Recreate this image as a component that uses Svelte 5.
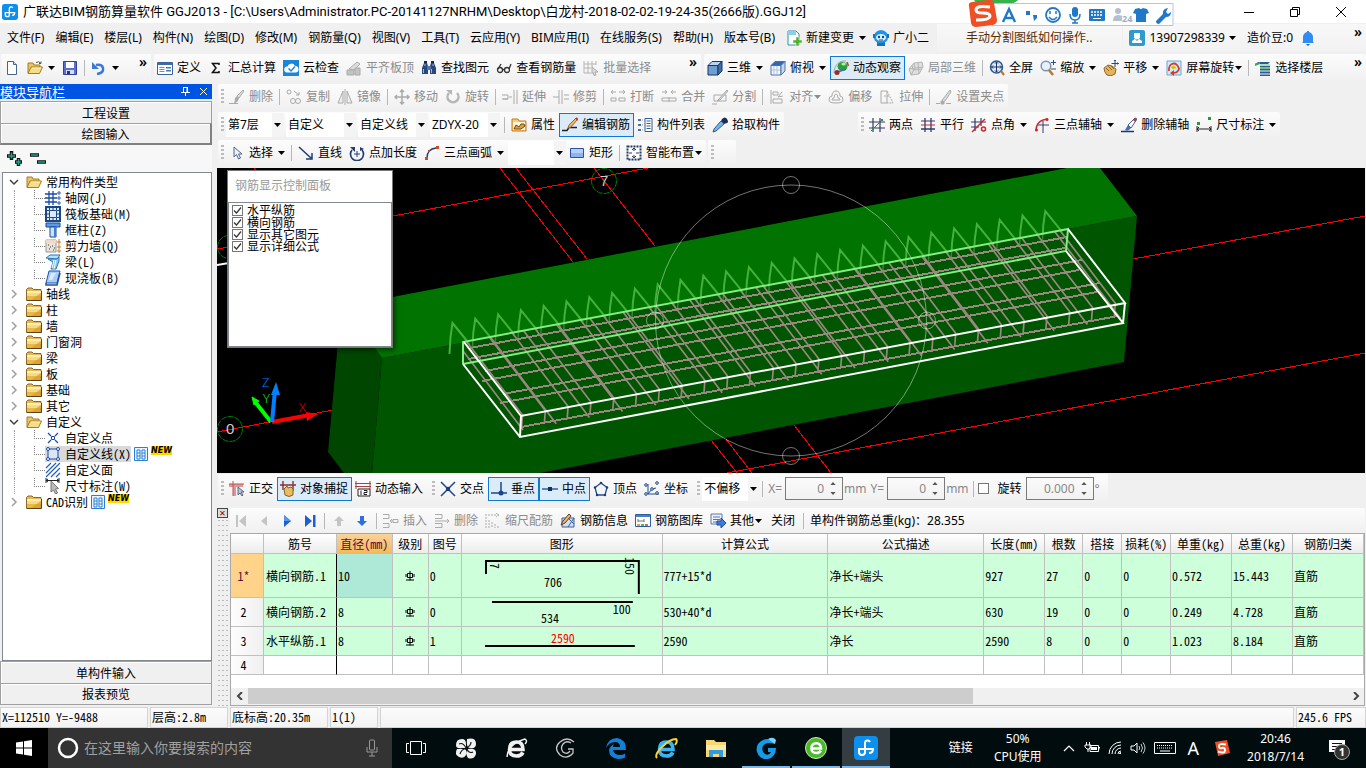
<script lang="ts">
	type Item = {
		kind: 'button' | 'sep' | 'grip' | 'select';
		icon?: string;
		label?: string;
		off?: boolean;
		active?: boolean;
		drop?: 'wide' | 'tight';
		size?: string;
		name?: string;
	};

	const sep: Item = { kind: 'sep' };
	const grip: Item = { kind: 'grip' };
	const tool = (icon: string, label: string, more: Partial<Item> = {}): Item => ({ kind: 'button', icon, label, ...more });
	const combo = (label: string, size: string, name: string): Item => ({ kind: 'select', label, size, name });
	const off = { off: true };

	const menus = ['文件(F)', '编辑(E)', '楼层(L)', '构件(N)', '绘图(D)', '修改(M)', '钢筋量(Q)', '视图(V)', '工具(T)', '云应用(Y)', 'BIM应用(I)', '在线服务(S)', '帮助(H)', '版本号(B)'];

	const fileBar: Item[] = [tool('new', ''), tool('open', '', { drop: 'wide' }), tool('save', ''), sep, tool('undo', '', { drop: 'wide' })];
	const calcBar: Item[] = [
		tool('define', '定义'), tool('sigma', '汇总计算'), tool('cloud', '云检查'), tool('flush', '平齐板顶', off),
		tool('find', '查找图元'), tool('glasses', '查看钢筋量'), tool('batch', '批量选择', off)
	];
	const viewBar: Item[] = [
		tool('cube', '三维', { drop: 'wide' }), tool('top', '俯视', { drop: 'wide' }), tool('orbit', '动态观察', { active: true }),
		tool('local', '局部三维', off), sep, tool('full', '全屏'), tool('zoom', '缩放', { drop: 'wide' }),
		tool('pan', '平移', { drop: 'wide' }), tool('spin', '屏幕旋转', { drop: 'tight' }), sep, tool('floors', '选择楼层')
	];
	const modifyBar: Item[] = [
		grip, tool('brush', '删除', off), sep, tool('copy', '复制', off), tool('mirror', '镜像', off), sep,
		tool('move', '移动', off), tool('rotate', '旋转', off), sep, tool('extend', '延伸', off), tool('trim', '修剪', off), sep,
		tool('break', '打断', off), tool('join', '合并', off), tool('split', '分割', off), sep,
		tool('align', '对齐', { off: true, drop: 'tight' }), tool('offset', '偏移', off), tool('stretch', '拉伸', off), sep,
		tool('pen', '设置夹点', off)
	];
	const memberBar: Item[] = [
		grip, combo('第7层', 'short', '楼层'), combo('自定义', 'long', '构件类型'), combo('自定义线', 'long', '构件'), combo('ZDYX-20', 'long', '构件名称'), sep,
		tool('props', '属性'), tool('editbar', '编辑钢筋', { active: true }), tool('list', '构件列表'), tool('picker', '拾取构件')
	];
	const axisBar: Item[] = [
		grip, tool('twopt', '两点'), tool('parallel', '平行'), tool('ptangle', '点角', { drop: 'wide' }),
		tool('arcaxis', '三点辅轴', { drop: 'wide' }), tool('delaxis', '删除辅轴'), tool('dim', '尺寸标注', { drop: 'wide' })
	];
	const drawBar: Item[] = [
		grip, tool('cursor', '选择', { drop: 'wide' }), sep, tool('line', '直线'), tool('ptlen', '点加长度'),
		tool('arc', '三点画弧', { drop: 'wide' }), combo('', 'short', '画法'), tool('rect', '矩形'), sep, tool('smart', '智能布置', { drop: 'tight' })
	];
	const snapBar: Item[] = [
		grip, tool('ortho', '正交'), tool('osnap', '对象捕捉', { active: true }), tool('dyn', '动态输入'), grip,
		tool('cross', '交点'), tool('perp', '垂点', { active: true }), tool('mid', '中点', { active: true }), tool('vertex', '顶点'),
		tool('coord', '坐标'), grip, combo('不偏移', 'short', '偏移方式'), sep
	];
	const rebarBar: Item[] = [
		tool('first', '', off), tool('prev', '', off), tool('next', ''), tool('last', ''), sep, tool('up', '', off), tool('down', ''), sep,
		tool('insert', '插入', off), tool('remove', '删除', off), tool('scale', '缩尺配筋', off), tool('info', '钢筋信息'),
		tool('lib', '钢筋图库'), tool('other', '其他', { drop: 'tight' })
	];

	const tips: Record<string, string> = {
		new: '新建', open: '打开', save: '保存', undo: '撤销', first: '首行', prev: '上一行', next: '下一行', last: '末行', up: '上移', down: '下移', bell: '消息'
	};

	const folder = '<path d="M.5 14.500V3.500L2 2h4l1.500 1.500H15v11z" fill="#e9b949" stroke="#8a6a24"/><path d="M1 5h14v2H1z" fill="#fff0b8"/><path d="M1 7h14v3H1z" fill="#f9da80"/><path d="M15 7v7H5z" fill="#d99a28" opacity=".7"/><path d="M1 14.500h14.500V5" fill="none" stroke="#5a4418"/>';
	const folderOpen = '<path d="M1 13V3h5l1 2h6v3" fill="#e9c565" stroke="#a67c1e"/><path d="M1 13.500 4 7h11.500l-3 6.500z" fill="#fbdc84" stroke="#a67c1e"/><path d="M5 8h9" stroke="#fff3c4"/>';
	const box = (a: string, b: string, c: string, s: string) =>
		`<g stroke="${s}"><path d="M1 5.500 5 1.500h10l-4 4z" fill="${a}"/><path d="M1 5.500h10v9.500H1z" fill="${b}"/><path d="M11 5.500l4-4V11l-4 4z" fill="${c}"/></g>`;

	const icons: Record<string, string> = {
		new: '<path d="M3.500 1.500h6l3 3v10h-9z" fill="#fff" stroke="#4a6484"/><path d="M9.500 1.500v3h3" fill="#cfdcec" stroke="#4a6484"/>',
		open: folderOpen + '<path d="M9 2.500q3-2 5 1m0-2v2h-2" fill="none" stroke="#555"/>',
		save: '<path d="M1.500 1.500h13v13h-13z" fill="#5b6fd0" stroke="#333f9a"/><path d="M4 2h8v6H4z" fill="#fff"/><path d="M4 10h8v4H4z" fill="#d6dcf5"/><path d="M5 11h3v3H5z" fill="#28348a"/>',
		undo: '<path d="M6 14q7-1 6-6-1-4-7-3" fill="none" stroke="#3b78d8" stroke-width="2.500"/><path d="M1 2v7h7z" fill="#3b78d8"/>',
		define: '<path d="M.5 2.500h15v12H.5z" fill="#fff" stroke="#3a6598"/><path d="M1 3h14v2H1z" fill="#3a6bb0"/><path d="M2.500 7.500h5m-5 2h5m-5 2h5" stroke="#6c8eb8"/><path d="M9 7h5v1.500H9zm0 3h5v1.500H9z" fill="#4878b5"/>',
		sigma: '<path d="M11 5V3.500H4.500L8 8l-3.500 4.500H11V11" fill="none" stroke="#111" stroke-width="1.500"/>',
		cloud: '<path d="M0 0h16v16H0z" fill="#1b86d8"/><path d="M4 12.500a3 3 0 0 1 .5-6A4 4 0 0 1 12 6a3 3 0 0 1 .5 6.500z" fill="#fff"/><path d="M5.500 8.500 8 11l4-4.500" fill="none" stroke="#1b86d8" stroke-width="1.500"/>',
		flush: '<path d="M3 9 11 2l3 2-6 6z" fill="#ddd" stroke="#aaa"/><path d="M1 10h7v5H1zM9 8h5v7H9z" fill="#c4c4c4" stroke="#aaa"/>',
		find: '<path d="M3 3h3l1 3v8H1V8zM10 3h3l2 5v6H9V6z" fill="#28487c"/><path d="M6 6h4v4H6z" fill="#5174aa"/><path d="M2.500 9v4M10.500 9v4M4 4v2m8-2v2" stroke="#9dbbe8"/><path d="M3 1h3v2H3zm7 0h3v2h-3z" fill="#14284c"/>',
		glasses: '<g fill="none" stroke="#333" stroke-width="1.300"><circle cx="4" cy="10" r="2.500"/><circle cx="11" cy="10" r="2.500"/><path d="M6.500 10q1-1 2 0M2 9l3-5m8 5 2-5"/></g>',
		batch: '<path d="M1 1v12h7M1 4h12M1 8h7M5 1v12M9 1v6M13 1v4" fill="none" stroke="#b5b5b5"/><path d="M9 7l6 5h-3l1 3-2 .5-1-3-1 1z" fill="#ddd" stroke="#aaa"/>',
		cube: box('#b8d6f4', '#6f9fd0', '#3f6ea6', '#17375e'),
		top: box('#2f68b8', '#f5f8fc', '#c9d8ec', '#4a74a8') + '<path d="M4 6v8m3-8v8M2 10h8" stroke="#aec4e0"/>',
		orbit: '<path d="M1 13C1 6 5 2 10 1l3 0" fill="none" stroke="#9aa3ac"/><ellipse cx="9.500" cy="6.500" rx="5" ry="4.500" fill="#2e9e3c"/><path d="M8 4q3-3 5 0-2 3-5 0z" fill="#b6edae"/><path d="M2 13 13 9" stroke="#3a6cc0" stroke-width="1.500"/><circle cx="4" cy="12.500" r="2.500" fill="#9c2c20"/><path d="M14 2l1.500 4" stroke="#c03a2c" stroke-width="1.500"/>',
		local: '<g fill="#e0e0e0" stroke="#b5b5b5"><path d="M1 9l5-6 8-1 1 5-4 7-8 1z"/><path d="M6 3l1 5 8-1M7 8l-4 7M1 9l6-1M10 2.500 11 14M4 5l1 5 8-1" fill="none"/></g>',
		full: '<circle cx="7.500" cy="7" r="6" fill="#dfeaf8" stroke="#2b548f" stroke-width="1.500"/><path d="M7.500 2v10m-5-5h10M6 3.500 7.500 2 9 3.500M6 10.500 7.500 12 9 10.500M4 5.500 2.500 7 4 8.500m7-3L12.500 7 11 8.500" fill="none" stroke="#1a3768"/><path d="m12 11 3 4" stroke="#b97734" stroke-width="2.200"/>',
		zoom: '<circle cx="6" cy="6" r="4.800" fill="#e8f0fa" stroke="#7c94b2" stroke-width="1.500"/><path d="m9 10 4 5" stroke="#b97734" stroke-width="2.500"/><path d="M13.500 0v5M11 2.500h5M11 9h5" stroke="#2d507f"/>',
		pan: '<path d="M1 8 5 5l4 1 4 3-1 5q-4 3-8 1-3-3-3-7z" fill="#e3b458" stroke="#95662a"/><path d="M3 8l3 3M5 6l4 4M8 6l3 3" stroke="#95662a"/><path d="M12 0v7M8.500 3.500h7M11 1l1-1 1 1M14.500 2.500l1 1-1 1" fill="none" stroke="#244b84"/>',
		spin: '<path d="M1 1h14v14H1z" fill="#cfeaf8" stroke="#68a9d4"/><path d="M3 11c-1-8 8-11 10-2-1 3-3 4-6 4" fill="none" stroke="#d43a30" stroke-width="1.800"/><path d="M8 10v6l-4-3z" fill="#d43a30"/><path d="M5 7.500q2-3 5 0-2 3-5 0z" fill="#7fc255" stroke="#e4d23e"/>',
		floors: '<path d="M3 2h12l-2 2H1zm2 4h10v1.500H5zm0 3h10v1.500H5zm0 3h10v1.500H5zm0 2.500h10V16H5z" fill="#2c5d8d"/><path d="M0 3.500 5 2v2L0 6z" fill="#3fa35c"/><path d="M5 5h10M5 8.500h10M5 11.500h10" stroke="#6fbf86"/>',
		brush: '<path d="M14 1 8 7l2 2 5-7z" fill="#ddd" stroke="#aaa"/><path d="M8 7l2 2q-1 5-5 5 1-2 1-5z" fill="#aaa"/><path d="M0 14.500h9" stroke="#aaa"/>',
		copy: '<g fill="none" stroke="#aaa"><circle cx="3" cy="3" r="2"/><circle cx="7" cy="12" r="2.500"/><circle cx="12" cy="12" r="2.500"/><path d="M8 2l5 4m0-3v3h-3"/></g>',
		mirror: '<path d="M6 2v12H1zM10 2v12h5z" fill="#eee" stroke="#aaa"/><path d="M8 0v16" stroke="#aaa"/>',
		move: '<path d="M8 1v14M1 8h14M6 3l2-2 2 2M6 13l2 2 2-2M3 6 1 8l2 2M13 6l2 2-2 2" fill="none" stroke="#aaa" stroke-width="1.500"/>',
		rotate: '<path d="M4 4a5.500 5.500 0 1 0 8 0" fill="none" stroke="#b5b5b5" stroke-width="2.500"/><path d="M1 1h6v5z" fill="#b5b5b5"/>',
		extend: '<path d="M0 6h6v4H0m1 0h5M15 1v14M12 1v14M7 8h3" fill="none" stroke="#aaa"/>',
		trim: '<path d="M0 8h6M6 1v14M9 1v14M11 6h5m-5 4h5" fill="none" stroke="#aaa"/>',
		break: '<path d="M1 3h5M9 3h6M1 3l2-2M1 3l2 2m12-2-2-2m2 2-2 2M1 9h5v3H1zm8 0h6v3H9z" fill="none" stroke="#aaa"/>',
		join: '<path d="M1 3h5l-2-2m2 2L4 5m11-2h-5l2-2m-2 2 2 2M1 9h14v3H1zM8 8v5" fill="none" stroke="#aaa"/>',
		split: '<path d="M2 6h12v6H2zM0 15h5" fill="none" stroke="#aaa"/><path d="m15 1-8 9-2 2 3-1 8-9z" fill="#ddd" stroke="#aaa"/>',
		align: '<path d="M2 1v14M4 3h5v3H4zM4 10h9v4H4zM13 3l-4 5 5-1" fill="none" stroke="#aaa"/>',
		offset: '<path d="M8 2q4 0 4 5 3 0 3 4 0 3-7 3t-7-3q0-4 3-4 0-5 4-5z" fill="none" stroke="#aaa"/><path d="M8 5q2 0 2 4 2 0 2 2H4q0-2 2-2 0-4 2-4z" fill="none" stroke="#aaa"/>',
		stretch: '<path d="M2 2h6v12H2z" fill="none" stroke="#aaa"/><path d="M8 2l6 12H8M5 7h6" fill="none" stroke="#aaa" stroke-dasharray="2 1"/>',
		pen: '<path d="M0 14.500h4m6 0h5M5 12h3v3H5z" fill="#aaa" stroke="#aaa"/><path d="m14 1-7 9-1 3 3-1 6-9z" fill="#ddd" stroke="#aaa"/>',
		props: '<path d="M1 2h6l1 2h7v10H1z" fill="#f9cc78" stroke="#c77a1f"/><path d="M2 5h12v8H2z" fill="#fff4dc"/><path d="M3 12l2-4 3 2 2-3h3l1 2-4 3z" fill="#d9a53c" stroke="#6c4a14"/>',
		editbar: '<path d="M0 13.500h5l2-3h8" fill="none" stroke="#222" stroke-width="1.500"/><path d="m14 1-7 7-1 3 3-1 6-7z" fill="#f0b56a" stroke="#a8662e"/><path d="m14 1 2 2" stroke="#c0392b" stroke-width="2"/>',
		list: '<path d="M1 2h3v2H1zm0 5h3v2H1zm0 5h3v2H1z" fill="#4a6fb0"/><path d="M8 1.500h7v13H8z" fill="#fff" stroke="#345a94"/><path d="M9.500 4h4m-4 2.500h4m-4 2.500h4m-4 2.500h4" stroke="#345a94"/><path d="M5 3h3M5 8h3M5 13h3" stroke="#999" stroke-dasharray="1 1"/>',
		picker: '<path d="M10 2q3-3 5 0t0 4l-3 1-3-3z" fill="#1c2f52"/><path d="m9 4 3 3-8 7-3 1 1-3z" fill="#78b4e8" stroke="#2a5a94"/>',
		twopt: '<path d="M4 1v14M11 1v14M0 5h16M0 11h16" stroke="#333a6e" stroke-width="1.200"/><path d="m2 14 12-12" stroke="#c62a2a"/><path d="M3 11h2v2H3zm9-9h2v2h-2z" fill="#269a32"/>',
		parallel: '<path d="M5 1v14M11 1v14M1 12h14" stroke="#333a6e" stroke-width="1.300"/><path d="M1 4h14" stroke="#333a6e"/><path d="M1 8h14" stroke="#c62a2a"/>',
		ptangle: '<path d="M4 1v13M10 1v8M0 5h15M0 10h8" stroke="#333a6e" stroke-width="1.200"/><path d="M1 15 14 2" stroke="#d02626" stroke-width="1.400"/><circle cx="12.500" cy="12" r="2" fill="none" stroke="#d02626" stroke-width="1.500"/>',
		arcaxis: '<path d="M2 14Q2 3 14 2" fill="none" stroke="#d02626" stroke-width="1.500"/><path d="M9 4v12M4 8h11" stroke="#333a6e"/><circle cx="2.500" cy="13" r="1.500" fill="#d02626"/><circle cx="13" cy="2.500" r="1.500" fill="#d02626"/>',
		delaxis: '<path d="M0 14.500h13" stroke="#1f376c" stroke-width="1.500"/><path d="M14 1 7 8l3 3 6-9z" fill="#fff" stroke="#445f93"/><path d="m7 8 3 3q-3 4-6 2z" fill="#4372b8"/><path d="m14 1 2 1-2 3-2-2z" fill="#c0392b"/>',
		dim: '<path d="M1 9v6m14-6v6M1 12h14M3 10l-2 2 2 2m10-4 2 2-2 2" fill="none" stroke="#222"/><path d="M1 5h3v3H1zM12 0h3v3h-3z" fill="#269a32"/>',
		cursor: '<path d="M5 2v10l2.500-2.500L9.500 14l2-1L9.500 9H13z" fill="#eef3fa" stroke="#4b678e"/>',
		line: '<path d="m1 2 12 11M14 8v6H8" fill="none" stroke="#1b3c78" stroke-width="1.500"/>',
		ptlen: '<path d="M3 5a6.500 6.500 0 1 0 10 0" fill="none" stroke="#223f70" stroke-width="1.700"/><path d="M8 6v6M5 9h6" stroke="#223f70"/><path d="M1 2h5v5zM15 4l-4-2v4z" fill="#223f70"/>',
		arc: '<path d="M3 13Q3 4 12 3" fill="none" stroke="#223f70" stroke-width="1.300"/><path d="M1 12h3v3H1zM4 5h2v2H4zm8-4h3v3h-3z" fill="#d04828"/>',
		rect: '<path d="M1.500 3.500h13v9h-13z" fill="#8db4ee" stroke="#2b52a8"/><path d="M2 4h12v4H2z" fill="#b8d1f8"/>',
		smart: '<path d="M1.500 1.500h13v13h-13z" fill="#fff" stroke="#26395e" stroke-width="2" stroke-dasharray="2 1"/><path d="M8 3v3M8 10v3M3 8h3M10 8h3M6 5l2-2 2 2M6 11l2 2 2-2" fill="none" stroke="#26395e"/>',
		ortho: '<path d="M0 3h14v3H7v9H4V6H0z" fill="#d99999"/><path d="M4 0v15M0 3h15" stroke="#bb5757"/><path d="M9 6v8l2-2 2 3 1-1-2-3h3z" fill="#b9c4d6" stroke="#596a86"/>',
		osnap: '<path d="M0 4h16M3 0v9M13 0v10" stroke="#8c2f2f" stroke-width="1.400"/><path d="M4 8l3-3 1 2 3-1 2 2v6q-4 3-8 0z" fill="#e8bd62" stroke="#8a6220"/>',
		dyn: '<path d="M0 2.500h16M0 5.500h16M1 0v8M15 0v8" stroke="#a24444"/><path d="M3 8h12v7H3z" fill="#fff" stroke="#222"/><path d="M6 9.500V14M9 9.500h3v2H9v2h3" fill="none" stroke="#222"/>',
		cross: '<path d="m1 1 14 14M15 1 1 15" stroke="#1b4a8c" stroke-width="1.500"/><circle cx="8" cy="8" r="2.200" fill="#1b3c78"/>',
		perp: '<path d="M10 1v11M0 12h16" stroke="#16478f" stroke-width="1.500"/><circle cx="10" cy="12" r="2.500" fill="#16478f"/>',
		mid: '<path d="M0 8h16" stroke="#16478f" stroke-width="1.300"/><path d="M6 6h4v4H6z" fill="#102f66"/>',
		vertex: '<path d="m8 2 6 4.500-2 7.500H4L2 6.500z" fill="none" stroke="#1c4f98" stroke-width="1.300"/><g fill="#1c3d78"><circle cx="8" cy="2" r="1.300"/><circle cx="14" cy="6.500" r="1.200"/><circle cx="2" cy="6.500" r="1.200"/><circle cx="4" cy="14" r="1.200"/><circle cx="12" cy="14" r="1.200"/></g>',
		coord: '<path d="M4 3v10h11M4 13 8 8l4-1" fill="none" stroke="#1c4f98"/><g fill="#fff" stroke="#1c3d78"><circle cx="2" cy="4" r="1.300"/><circle cx="2" cy="13" r="1.300"/><circle cx="8" cy="8" r="1.300"/><circle cx="13" cy="2" r="1.300"/><circle cx="13" cy="12" r="1.300"/></g>',
		first: '<path d="M3 2h2v12H3zM13 2v12L6 8z" fill="#c4c4c4"/>',
		prev: '<path d="M11 3v10L5 8z" fill="#c4c4c4"/>',
		next: '<path d="M5 2v12l7-6z" fill="#1d5fd3"/><path d="M5 2v6h7z" fill="#5b94ee"/>',
		last: '<path d="M3 2v12l7-6zM11 2h2.500v12H11z" fill="#1d5fd3"/>',
		up: '<path d="m8 3 5 5h-3v5H6V8H3z" fill="#c4c4c4"/>',
		down: '<path d="m8 13 5-5h-3V3H6v5H3z" fill="#2e6fe0"/>',
		insert: '<path d="M0 1.500h6v4H0m0 5h6v4H0M10 6.500h5v3h-5zM7 8h3M9 6 7 8l2 2" fill="none" stroke="#aaa"/>',
		remove: '<path d="M1 1.500h7v4H1m0 5h7v4H1M1 8h14M13 6l2 2-2 2" fill="none" stroke="#aaa"/>',
		scale: '<path d="M1 1v14M4 7v8m3-6v6m3-4v4m3-2v2M3 2h11m-3-2 3 2-3 2" fill="none" stroke="#aaa" stroke-dasharray="2 1"/>',
		info: '<path d="M2 14V5h12v9z" fill="#cfe0f4" stroke="#3e5f95"/><path d="M8 5l6 6M14 5l-6 9" stroke="#3e5f95"/><path d="m9 1-6 7-2 4 4-2 6-7z" fill="#f0b56a" stroke="#5e3b1c"/>',
		lib: '<path d="M.5 1.500h15v12H.5z" fill="#fff" stroke="#2e5e9e"/><path d="M1 2h14v2H1z" fill="#4a80c0"/><path d="M3 8h6M3 6v3m6-3v3" stroke="#777"/><path d="M2 11h3v2H2z" fill="#e7a13c"/><path d="M6 11h3v2H6z" fill="#58b558"/><path d="M10 11h3v2h-3z" fill="#d86a5a"/>',
		other: '<path d="M1 1h11v10H1z" fill="#eef3fb" stroke="#5a77a6"/><path d="M3 4h7M3 6.500h7M3 9h4" stroke="#5a77a6"/><path d="M7 8h4V5l5 5-5 5v-3H7z" fill="#3d7be0" stroke="#1f4a9c"/>',
		change: '<path d="M2 1h8l3 3v11H2z" fill="#fff" stroke="#2e90a6"/><path d="M2 1h8v4H2z" fill="#88d0e8"/><path d="M10 7h3v3h3v3h-3v3h-3v-3H7v-3h3z" fill="#50b030" stroke="#fff" stroke-width=".5"/>',
		robot: '<path d="M4 12h8v4H4z" fill="#1470c0"/><path d="M8 0q7 1 7 7 0 6-7 6T1 7q0-6 7-7z" fill="#2094e8"/><ellipse cx="8" cy="7.500" rx="5" ry="3.500" fill="#dff2ff"/><circle cx="6" cy="7" r="1.200" fill="#134a84"/><circle cx="10" cy="7" r="1.200" fill="#134a84"/><path d="M6 10h4" stroke="#134a84"/><path d="M0 4h2v4H0zm14 0h2v4h-2z" fill="#1470c0"/>',
		user: '<rect width="16" height="16" rx="2" fill="#2e9ad0"/><path d="M5 3h6v5q-3 3-6 0z" fill="#fff"/><path d="M3 13v-2l3-2 2 2 2-2 3 2v2z" fill="#fff"/>',
		bell: '<path d="M3 12V7a5 5 0 0 1 10 0v5l1 1H2z" fill="#2f8cf0"/><path d="M6 14h4l-2 2z" fill="#1b66c4"/><path d="M7 1h2v2H7z" fill="#2f8cf0"/>',
		folder,
		folderOpen,
		grid: '<path d="M4 1v14M8 1v14M0 4h12M0 8h12M0 12h12" stroke="#1c4aa6" stroke-width="1.300"/><g fill="#fff" stroke="#1c4aa6"><circle cx="14" cy="3" r="1.200"/><circle cx="14" cy="8" r="1.200"/><circle cx="14" cy="13" r="1.200"/></g>',
		raft: '<path d="M1 1h14v14H1z" fill="#dcebfb" stroke="#1a4786" stroke-width="2"/><path d="M4.500 4.500h7v7h-7zM4.500 1v3M8 1v3m3.500-3v3M4.500 12v3M8 12v3m3.500-3v3M1 4.500h3M1 8h3m-3 3.500h3M12 4.500h3M12 8h3m-3 3.500h3" fill="none" stroke="#1a4786"/>',
		column: '<path d="M1 1h14v4H1z" fill="#5a9aea" stroke="#174a96"/><path d="M5 5h6v10H5z" fill="#cfe2fa" stroke="#174a96"/><path d="M9 5h2v10H9z" fill="#3d7ed6"/>',
		wall: '<path d="M1 2h10v12H1z" fill="#e8e4de" stroke="#9a948c"/><path d="M1 2h10v3H1z" fill="#efd9c8"/><path d="M3 7h1m3 1h1m1 2h1M4 11h1m3 1h1M5 9h1" stroke="#333"/><path d="M14 1v14M12 4h4m-4 5h4m-4 4h4" stroke="#d07830"/>',
		beam: '<path d="M1 4 5 1h10l-3 4z" fill="#bfe0f8" stroke="#2478b8"/><path d="M3 5h9l2-2v4l-3 8H6l2-7z" fill="#8cc6f0" stroke="#2478b8"/><path d="M9 6 7 14m4-8-2 9" stroke="#fff"/>',
		slab: '<path d="M4 1h11l-3 12H1z" fill="#a9cdf8" stroke="#1d50a8"/><path d="M1 13v2h11l3-12" fill="none" stroke="#1d50a8" stroke-width="1.500"/><path d="M6 3h5l-4 7H4z" fill="#fff" opacity=".6"/>',
		point: '<path d="m3 3 3 3m4 4 3 3M13 3l-3 3m-4 4-3 3" stroke="#1c4aa6" stroke-width="1.200"/><path d="M6.500 6.500h3v3h-3z" fill="#fff" stroke="#1c4aa6"/>',
		cline: '<path d="M3 3h10v10H3z" fill="#dce6f2" stroke="#1c4aa6"/><g fill="#fff" stroke="#1c4aa6"><circle cx="3" cy="3" r="1.500"/><circle cx="13" cy="3" r="1.500"/><circle cx="3" cy="13" r="1.500"/><circle cx="13" cy="13" r="1.500"/></g>',
		cface: '<path d="M1 6l5-5M1 11 11 1M1 15 15 1M6 15l9-9m-4 9 4-4" stroke="#1c5ac6" stroke-width="1.100"/>',
		cdim: '<path d="M1 0v5m13-5v5M1 2.500h13M3 1 1 2.500 3 4m9-3 2 1.500L12 4" fill="none" stroke="#222"/><path d="M6 3v11l2.500-2 2 4 2-1-2-4 3-.5z" fill="#bbb" stroke="#777"/>',
		badge: '<path d="M1.500 1.500h13v13h-13z" fill="#e8f4ff" stroke="#2a7fcf"/><path d="M4 4h3v9H4zm5 0h3v9H9z" fill="#fff" stroke="#2a7fcf"/><path d="M4 7h3m-3 3h3m2-3h3m-3 3h3" stroke="#2a7fcf"/>'
	};

	type Node = { icon: string; label: string; deep?: boolean; open?: boolean; selected?: boolean; fresh?: boolean };
	const leaf = (icon: string, label: string, more: Partial<Node> = {}): Node => ({ icon, label, deep: true, ...more });
	const tree: Node[] = [
		{ icon: 'folderOpen', label: '常用构件类型', open: true },
		leaf('grid', '轴网(J)'), leaf('raft', '筏板基础(M)'), leaf('column', '框柱(Z)'),
		leaf('wall', '剪力墙(Q)'), leaf('beam', '梁(L)'), leaf('slab', '现浇板(B)'),
		...['轴线', '柱', '墙', '门窗洞', '梁', '板', '基础', '其它'].map((label) => ({ icon: 'folder', label })),
		{ icon: 'folderOpen', label: '自定义', open: true },
		leaf('point', '自定义点'), leaf('cline', '自定义线(X)', { selected: true, fresh: true }), leaf('cface', '自定义面'), leaf('cdim', '尺寸标注(W)'),
		{ icon: 'folder', label: 'CAD识别', fresh: true }
	];

	const columns = [
		{ title: '', w: 33 }, { title: '筋号', w: 73 }, { title: '直径(mm)', w: 56 }, { title: '级别', w: 36 }, { title: '图号', w: 33 },
		{ title: '图形', w: 201 }, { title: '计算公式', w: 166 }, { title: '公式描述', w: 156 }, { title: '长度(mm)', w: 61 },
		{ title: '根数', w: 38 }, { title: '搭接', w: 39 }, { title: '损耗(%)', w: 49 }, { title: '单重(kg)', w: 61 },
		{ title: '总重(kg)', w: 61 }, { title: '钢筋归类', w: 71 }
	];
	const totalWidth = columns.reduce((sum, c) => sum + c.w, 0);
	const rows = [
		{ no: '1*', tall: true, before: ['横向钢筋.1', '10'], shape: '0', after: ['777+15*d', '净长+端头', '927', '27', '0', '0', '0.572', '15.443', '直筋'] },
		{ no: '2', tall: false, before: ['横向钢筋.2', '8'], shape: '0', after: ['530+40*d', '净长+端头', '630', '19', '0', '0', '0.249', '4.728', '直筋'] },
		{ no: '3', tall: false, before: ['水平纵筋.1', '8'], shape: '1', after: ['2590', '净长', '2590', '8', '0', '0', '1.023', '8.184', '直筋'] }
	];

	let layers = $state([
		{ name: '水平纵筋', on: true },
		{ name: '横向钢筋', on: true },
		{ name: '显示其它图元', on: true },
		{ name: '显示详细公式', on: true }
	]);

	// stirrups run along the back edge of the slab, main bars parallel to it
	const stirrups = Array.from({ length: 27 }, (_, i) => [452.500 + i * 22.800, 323 - i * 4.300]);
	const lowerBars = Array.from({ length: 19 }, (_, i) => [457 + i * 33.200, 343 - i * 6.200]);
	const mainBars = [[470, 348], [468, 359], [485, 371], [482, 381], [503, 394], [500, 403], [521, 427]];
	const spikes = stirrups.map(([x, y]) => `M${x - 3} ${y + 31}L${x - 2} ${y + 14}L${x} ${y}L${x + 17} ${y + 21}`).join('');
	const crossBars =
		stirrups.map(([x, y]) => `M${x} ${y}L${x + 70} ${y + 92}l-1 13`).join('') + lowerBars.map(([x, y]) => `M${x} ${y}l66 87`).join('');
	const longBars = mainBars.map(([x, y]) => `M${x} ${y}l597 -111`).join('');

	const apps = ['pinwheel', 'egrey', 'swirl', 'edge', 'ie', 'files', 'g', 'e360', 'ggj'];
	const appNames = ['风车', '浏览器', '广联云', 'Edge', 'Internet Explorer', '文件资源管理器', '广联达', '360浏览器', '钢筋算量'];
	const letterE = (color: string) =>
		`<path d="M19 16.500Q17 20 12.500 20 5.500 20 5.500 13.500 5.500 6 12.500 6 19 6 19 13.500H7" fill="none" stroke="${color}" stroke-width="3.600"/>`;
	const appIcons: Record<string, string> = {
		pinwheel: '<g fill="#f1f1f1"><path d="M2 9q0-6 6-6 4 0 4 5v4H8Q2 13 2 9zM13 3q9-2 9 5 0 5-6 4-4 0-3-9zM3 13h7q4 1 2 6-2 4-7 2-5-3-2-8zM14 13q9-1 8 5-2 6-8 4-3-4 0-9z"/></g><path d="M5 8q4-2 7 4t7 4M17 6q0 4-5 6t-6 6" fill="none" stroke="#111" stroke-width="1.200"/>',
		egrey: letterE('#f1f1f1') + '<path d="M3 21Q4 8 21 3q3 2 0 5" fill="none" stroke="#f1f1f1" stroke-width="1.500"/>',
		swirl: '<g fill="none" stroke="#c4c4c4" stroke-width="1.300"><path d="M20 6Q13 0 6 6t0 13q7 5 13-2v-4h-5"/><path d="M17 7q-5-3-8 1t0 8q4 3 7-1"/></g>',
		edge: '<path d="M2 12Q4 2 13 2q9 1 9 12H9q1 5 7 5 3 0 5-1.500v4Q18 23 14 23 5 22 5 14q1-4 5-6-1 1-1 3h7q0-5-5-5-6 0-9 6z" fill="#1380d8"/>',
		ie: letterE('#3bb4f2') + '<path d="M3 22Q0 19 8 11T22 3q2 2-1 6" fill="none" stroke="#f6d332" stroke-width="2"/>',
		files: '<path d="M2 4h8l2 2h10v15H2z" fill="#f7d774"/><path d="M2 9h20v5H2z" fill="#fdeaa6"/><path d="M5 14h14v7h-4v-3H9v3H5z" fill="#2f9ce0"/>',
		g: '<path d="M21 8Q17 1 9 4 1 8 3 16q3 8 11 7 8-2 8-11h-8v4h3q-2 4-6 2-4-3-2-8 3-5 12-2z" fill="#159be8"/><path d="M14 3q5-3 8 1l-1 4z" fill="#7ad3ff"/>',
		e360: `<circle cx="12" cy="12" r="10.500" fill="#4cb82e"/><circle cx="12" cy="12" r="10.500" fill="none" stroke="#c8f0a8"/><g transform="translate(3.600 3) scale(.7)">${letterE('#fff')}</g>`,
		ggj: '<rect x="0" y="0" width="24" height="24" rx="4" fill="#0e8fee"/><path d="M16 6q-1-2-3-1.500T11 7v9q0 3-3 3t-3-3v-3h14q0 4-4 4" fill="none" stroke="#fff" stroke-width="2"/>'
	};
</script>

{#snippet icon(name)}
	<svg class="icon" viewBox="0 0 16 16" aria-hidden="true">{@html icons[name]}</svg>
{/snippet}

{#snippet arrow()}
	<svg class="arrow" viewBox="0 0 7 4" aria-hidden="true"><path d="M0 0h7L3.500 4z" fill="currentColor" /></svg>
{/snippet}

{#snippet more()}
	<button class="more" aria-label="更多">»</button>
{/snippet}

{#snippet tools(items)}
	{#each items as item}
		{#if item.kind === 'sep'}
			<span class="sep"></span>
		{:else if item.kind === 'grip'}
			<span class="grip"></span>
		{:else if item.kind === 'select'}
			<span class="combo {item.size}">
				<select aria-label={item.name}><option>{item.label}</option></select>
				{@render arrow()}
			</span>
		{:else}
			<button class="tool" class:active={item.active} disabled={item.off} aria-label={item.label ? undefined : tips[item.icon]}>
				{@render icon(item.icon)}
				{#if item.label}<span>{item.label}</span>{/if}
				{#if item.drop}<i class="drop {item.drop}">{@render arrow()}</i>{/if}
			</button>
		{/if}
	{/each}
{/snippet}

{#snippet steps()}
	<span class="steps">
		<svg viewBox="0 0 7 4"><path d="M0 4h7L3.500 0z" fill="#555" /></svg>
		<svg viewBox="0 0 7 4"><path d="M0 0h7L3.500 4z" fill="#555" /></svg>
	</span>
{/snippet}

<div class="window">
	<header class="titlebar">
		<svg class="logo" viewBox="0 0 24 24" aria-hidden="true">{@html appIcons.ggj}</svg>
		<h1>广联达BIM钢筋算量软件 GGJ2013 - [C:\Users\Administrator.PC-20141127NRHM\Desktop\白龙村-2018-02-02-19-24-35(2666版).GGJ12]</h1>
		<div class="caption">
			<button aria-label="最小化"><svg viewBox="0 0 10 10"><path d="M0 5.500h10" stroke="#000" /></svg></button>
			<button aria-label="还原"><svg viewBox="0 0 10 10"><path d="M.5 2.500h7v7h-7zM2.500 2.500v-2h7v7h-2" fill="none" stroke="#000" /></svg></button>
			<button aria-label="关闭"><svg viewBox="0 0 10 10"><path d="m0 0 10 10M10 0 0 10" stroke="#000" /></svg></button>
		</div>
	</header>

	<!-- input method bar floating above the title -->
	<div class="ime">
		<svg viewBox="0 0 206 28" aria-hidden="true">
			<path d="M6 0h44q-4 4-10 4H16Q8 4 6 0z" fill="#35b24c" />
			<path d="M24 3.500h181v22H24z" fill="#fff" stroke="#b4c5dc" />
			<path d="M1 6q-1-3 3-4l17-2q4-1 5 3l3 17q0 4-4 5L8 27q-4 0-5-4z" fill="#f04e23" />
			<path d="M22 7Q8 5 8 10q0 3 7 3t7 3q0 4-14 4" fill="none" stroke="#fff" stroke-width="3" />
			<path d="M35 22 41 9l6 13M37 18h8" fill="none" stroke="#2078c8" stroke-width="2.400" />
			<path d="M58 11h4v4h-4zM65 15h4v3l-3 3z" fill="#2078c8" />
			<circle cx="85" cy="15" r="7" fill="none" stroke="#2078c8" stroke-width="1.800" />
			<path d="M82 11v3m6-3v3m-7 3q4 5 8 0" fill="none" stroke="#2078c8" stroke-width="1.500" />
			<rect x="104" y="7" width="6" height="10" rx="3" fill="#2078c8" />
			<path d="M102 14q0 6 5 6t5-6M107 20v3m-3 0h6" fill="none" stroke="#2078c8" stroke-width="1.500" />
			<rect x="121" y="9" width="16" height="12" rx="1" fill="#2078c8" />
			<path d="M123 12h12M123 15h12" stroke="#fff" stroke-dasharray="2 1" stroke-width="1.500" />
			<path d="M125 18.500h8" stroke="#fff" />
			<circle cx="150" cy="11" r="3" fill="#b3c0d4" />
			<path d="M145 21q0-6 5-6t4 2v4z" fill="#b3c0d4" />
			<text x="154" y="22" fill="#9fafc6" class="ime-num">24</text>
			<path d="m167 9 4-1q2 2 4 0l4 1 2 4-3 1v8h-10v-8l-3-1z" fill="#2078c8" />
			<path d="m188 21 7-7q-1-5 5-6l-2 4 2 2 3-2q0 5-5 5l-7 7q-3 0-3-3z" fill="#2078c8" />
		</svg>
	</div>

	<nav class="menubar">
		<div class="menus">
			{#each menus as menu}
				<button class="menu">{menu}</button>
			{/each}
		</div>
		{@render tools([tool('change', '新建变更', { drop: 'wide' }), tool('robot', '广小二')])}
		<a class="hint" href="#help">手动分割图纸如何操作..</a>
		<div class="account">
			{@render tools([tool('user', '13907298339', { drop: 'wide' })])}
			<span class="beans">造价豆:0</span>
			{@render tools([tool('bell', '')])}
			{@render more()}
		</div>
	</nav>

	<div class="bars">
		<div class="bar">{@render tools(fileBar)}{@render more()}</div>
		<div class="bar calc">{@render tools(calcBar)}{@render more()}</div>
		<div class="bar wide">{@render tools(viewBar)}{@render more()}</div>
	</div>

	<main class="body">
		<aside class="nav">
			<div class="nav-head">
				<h2>模块导航栏</h2>
				<button aria-label="固定"><svg viewBox="0 0 9 9"><path d="M2.500 0v5M6.500 0v5M2 .5h5M0 5.500h9M4.500 6v3" fill="none" stroke="#fff" /><path d="M5.500 0h1v5h-1z" fill="#fff" /></svg></button>
				<button aria-label="关闭面板"><svg viewBox="0 0 9 9"><path d="m1 1 7 7M8 1 1 8" stroke="#fff" /></svg></button>
			</div>
			<button class="tab">工程设置</button>
			<button class="tab pressed">绘图输入</button>
			<div class="nav-tools">
				<button aria-label="全部展开"><svg viewBox="0 0 17 16"><path d="M1 5h9M5.500 0v9M9 11h7M12.500 7v8" stroke="#111" stroke-width="3.500" /><path d="M2 5h7M5.500 1.500v6M10 11h5M12.500 8v6" stroke="#1ca58d" stroke-width="1.500" /></svg></button>
				<button aria-label="全部折叠"><svg viewBox="0 0 17 16"><path d="M1 4h9M8 11h9" stroke="#111" stroke-width="3.500" /><path d="M2 4h7M9 11h7" stroke="#1ca58d" stroke-width="1.500" /></svg></button>
			</div>
			<ul class="tree">
				{#each tree as node}
					<li class:deep={node.deep}>
						{#if !node.deep}
							<svg class="twist" viewBox="0 0 10 10" aria-hidden="true">
								<path d={node.open ? 'M1 3l4 4 4-4' : 'M3 1l4 4-4 4'} fill="none" stroke={node.open ? '#404040' : '#a0a0a0'} stroke-width="1.500" />
							</svg>
						{/if}
						<button class="node" class:selected={node.selected}>{@render icon(node.icon)}<span>{node.label}</span></button>
						{#if node.fresh}{@render icon('badge')}<em>NEW</em>{/if}
					</li>
				{/each}
			</ul>
			<button class="tab">单构件输入</button>
			<button class="tab">报表预览</button>
		</aside>

		<section class="work">
			<div class="row"><div class="bar">{@render tools(modifyBar)}</div></div>
			<div class="row split">
				<div class="bar">{@render tools(memberBar)}</div>
				<div class="bar">{@render tools(axisBar)}</div>
			</div>
			<div class="row">
				<div class="bar draw">{@render tools(drawBar)}</div>
				<div class="bar stub"><span class="grip"></span></div>
			</div>

			<div class="viewport">
				<svg class="scene" viewBox="217 168 1148 305" preserveAspectRatio="xMidYMid slice" role="img" aria-label="三维视图">
					<defs>
						<clipPath id="slab"><path d="M464 342 1068 229l57 74-2 21L520 438 463 364z" /></clipPath>
					</defs>
					<path
						d="M217 249l12-2M254 167l3 6M393 216l255-48M500 168l73 94M516 168l71 91M594 168l61 78M711 440l26 33M726 439l26 34M794 425l37 48M727 473l638-120M1133 259l232-43M217 432l116-22"
						fill="none"
						stroke="#f00"
						shape-rendering="crispEdges"
					/>
					<path d="M217 265l12-2" stroke="#fff" stroke-width="2" />
					<g fill="none" stroke="#008000" stroke-dasharray="6 1">
						<circle cx="604" cy="181" r="12.500" /><circle cx="230" cy="429" r="12.500" /><circle cx="229" cy="247" r="11.500" />
					</g>
					<g class="mark"><text x="600" y="186">7</text><text x="226" y="434">0</text></g>

					<path d="M330 309 1067 168h33l37 48L382 358l-8-10z" fill="#007300" />
					<path d="M382 358 1137 216l-13 146-584 111H372z" fill="#005500" />
					<path d="M340 320l35 28 7 10-10 115h-28l-16-21z" fill="#004600" />

					<path d={spikes} fill="none" stroke="#43b13a" stroke-width="2" />
					<path d="M464 342 1068 229l57 74L521 416z" fill="#005500" />
					<g clip-path="url(#slab)" fill="none">
						<path d={spikes} stroke="#2f8a2c" stroke-width="1.500" />
						<path d={crossBars} stroke="#988880" stroke-width="1.700" />
						<path d={longBars} stroke="#988880" stroke-width="2" shape-rendering="crispEdges" />
					</g>
					<path d="M463 364v-22L1068 229l-2 22L463 364" fill="none" stroke="#80ee80" stroke-width="2" />
					<path d="M464 342l57 74 604-113-57-74M463 364l57 73 603-114-57-72M521 416l-1 21M1125 303l-2 20" fill="none" stroke="#fff" stroke-width="2" />

					<g fill="none" stroke="#fff" stroke-opacity=".45">
						<circle cx="791" cy="320.500" r="135.500" />
						<circle cx="791" cy="185" r="8.500" /><circle cx="791" cy="456" r="8.500" />
						<circle cx="655" cy="320.500" r="8.500" /><circle cx="927" cy="320.500" r="8.500" />
					</g>

					<path d="M272 422l38-7" stroke="#f00" stroke-width="4" />
					<path d="M306 412l12 2-11 7z" fill="#f00" />
					<path d="M271 422l-15-19" stroke="#0f0" stroke-width="4" />
					<path d="M252 397l7 4-5 4z" fill="#0f0" stroke="#0f0" />
					<path d="M272 422l3-32" stroke="#0080ff" stroke-width="4" />
					<path d="M276 382l4 13h-9z" fill="#0080ff" />
					<g class="axis">
						<text x="262" y="387" fill="#0080ff">Z</text>
						<text x="263" y="403" fill="#0f0">Y</text>
						<text x="299" y="412" fill="#f00">X</text>
					</g>
				</svg>

				<div class="panel">
					<h3>钢筋显示控制面板</h3>
					<div class="panel-list">
						{#each layers as layer}
							<label><input type="checkbox" bind:checked={layer.on} /><span>{layer.name}</span></label>
						{/each}
					</div>
				</div>
			</div>

			<div class="row snap">
				<div class="bar">
					{@render tools(snapBar)}
					<label class="dimmed" for="off-x">X=</label>
					<span class="spinner"><input id="off-x" type="text" value="0" />{@render steps()}</span>
					<span class="dimmed">mm</span>
					<label class="dimmed" for="off-y">Y=</label>
					<span class="spinner"><input id="off-y" type="text" value="0" />{@render steps()}</span>
					<span class="dimmed">mm</span>
					{@render tools([sep])}
					<label class="turn"><input type="checkbox" />旋转</label>
					<span class="spinner long"><input type="text" value="0.000" aria-label="旋转角度" />{@render steps()}</span>
					<span class="dimmed">°</span>
				</div>
			</div>

			<div class="dock">
				<div class="dock-grip"><button aria-label="关闭钢筋编辑">×</button></div>
				<div class="dock-main">
					<div class="bar rebar">
						{@render tools(rebarBar)}
						<button class="plain">关闭</button>
						{@render tools([sep])}
						<output>单构件钢筋总重(kg)：28.355</output>
					</div>
					<div class="sheet">
						<table>
							<colgroup>
								{#each columns as c}<col style="width: {(c.w / totalWidth) * 100}%" />{/each}
							</colgroup>
							<thead>
								<tr>
									{#each columns as c, i}<th class:hot={i === 2}>{c.title}</th>{/each}
								</tr>
							</thead>
							<tbody>
								{#each rows as row, r}
									<tr class:tall={row.tall}>
										<th class:hot={r === 0}>{row.no}</th>
										<td class="frozen">{row.before[0]}</td>
										<td class:current={r === 0}>{row.before[1]}</td>
										<td class="grade"><svg viewBox="0 0 10 10"><path d="M2.500 2.500h5v4h-5zM5 0v9.500M1 9h8M1 3v3M9 3v3" fill="none" stroke="#000" /></svg></td>
										<td>{row.shape}</td>
										<td class="shape">
											{#if r === 0}
												<svg viewBox="0 0 200 43">
													<path d="M24 20V7h153v33" fill="none" stroke="#000" stroke-width="2" />
													<text x="82" y="33">706</text>
													<text transform="translate(28 9) rotate(90)">7</text>
													<text transform="translate(163 3) rotate(90)">150</text>
												</svg>
											{:else if r === 1}
												<svg viewBox="0 0 200 28">
													<path d="M30 4h141" stroke="#000" stroke-width="2" />
													<text x="151" y="16">100</text><text x="79" y="25">534</text>
												</svg>
											{:else}
												<svg viewBox="0 0 200 28">
													<path d="M23 19h150" stroke="#000" stroke-width="2" />
													<text x="89" y="16" fill="#f00">2590</text>
												</svg>
											{/if}
										</td>
										{#each row.after as cell}<td>{cell}</td>{/each}
									</tr>
								{/each}
								<tr class="blank">
									<th>4</th>
									{#each columns.slice(1) as _, i}<td class:frozen={i === 0}></td>{/each}
								</tr>
							</tbody>
						</table>
						<div class="scroll">
							<button aria-label="向左滚动"><svg viewBox="0 0 8 8"><path d="M6 0 2 4l4 4" fill="none" stroke="#444" stroke-width="2" /></svg></button>
							<div class="track"><div class="thumb"></div></div>
							<button aria-label="向右滚动"><svg viewBox="0 0 8 8"><path d="m2 0 4 4-4 4" fill="none" stroke="#444" stroke-width="2" /></svg></button>
						</div>
					</div>
				</div>
			</div>
		</section>
	</main>

	<footer class="status">
		<span class="s-xy">X=112510 Y=-9488</span>
		<span class="s-h">层高:2.8m</span>
		<span class="s-b">底标高:20.35m</span>
		<span class="s-n">1(1)</span>
		<span class="s-fill"></span>
		<span class="s-fps">245.6 FPS</span>
	</footer>

	<div class="taskbar">
		<button class="start" aria-label="开始"><svg viewBox="0 0 16 16"><path d="M0 2.500 7 1.500v6H0zM8 1.300 16 0v7.500H8zM0 8.500h7v6l-7-1zM8 8.500h8V16l-8-1.300z" fill="#fff" /></svg></button>
		<label class="search">
			<svg class="ring" viewBox="0 0 22 22"><circle cx="11" cy="11" r="9" fill="none" stroke="#fff" stroke-width="2.500" /></svg>
			<input type="text" placeholder="在这里输入你要搜索的内容" aria-label="搜索" />
			<svg class="mic" viewBox="0 0 12 18"><rect x="3.500" y="1" width="5" height="10" rx="1" fill="none" stroke="#999" /><path d="M1 8v5h10V8M6 13v4M3 17h6" fill="none" stroke="#999" /></svg>
		</label>
		<div class="apps">
			<button aria-label="任务视图"><svg viewBox="0 0 24 24"><path d="M6.500 5.500h11v13h-11zM5 7.500H2.500v9H5M19 7.500h2.500v9H19" fill="none" stroke="#fff" /></svg></button>
			{#each apps as app, i}
				<button class:running={i > 5} class:front={i === 8} aria-label={appNames[i]}><svg viewBox="0 0 24 24">{@html appIcons[app]}</svg></button>
			{/each}
		</div>
		<div class="tray">
			<span class="link">链接</span>
			<span class="cpu">50%<br />CPU使用</span>
			<svg viewBox="0 0 16 16"><path d="m3 11 5-5 5 5" fill="none" stroke="#fff" stroke-width="1.200" /></svg>
			<svg viewBox="0 0 16 16"><path d="M6 5.500h8.500v6H6zM14.500 7.500H16v2M2.500 2v3m3-3v3M1 5h6v2L5 9H3L1 7zM4 9v3" fill="none" stroke="#fff" /><path d="M7 7h6v3H7z" fill="#fff" /></svg>
			<svg viewBox="0 0 16 16"><path d="M2 14A12 12 0 0 1 14 2M5 14a9 9 0 0 1 9-9M8 14a6 6 0 0 1 6-6M11 14a3 3 0 0 1 3-3" fill="none" stroke="#fff" /><path d="M12 14a2 2 0 0 1 2-2v2z" fill="#fff" /></svg>
			<svg viewBox="0 0 16 16"><path d="M1 6h3l3-3v10l-3-3H1z" fill="none" stroke="#fff" /><path d="M9 6q1.500 2 0 4M11 4q3 4 0 8M13 2.500q4 5.500 0 11" fill="none" stroke="#ccc" /></svg>
			<svg class="kb" viewBox="0 0 24 16"><path d="M1.500 2.500h21v11h-21z" fill="none" stroke="#fff" /><path d="M4 5.500h16M4 8h16" stroke="#fff" stroke-dasharray="1 1" /><path d="M7 11h10" stroke="#fff" /></svg>
			<span class="lang">A</span>
			<svg viewBox="0 0 16 16"><path d="M1 2 13 0l3 13-12 3z" fill="#f04e23" /><path d="M12 4.500Q5 3 5 6t3 2 3 2.500-7 1" fill="none" stroke="#fff" stroke-width="2" /></svg>
			<time>20:46<br />2018/7/14</time>
			<button class="notes" aria-label="通知">
				<svg viewBox="0 0 20 20"><path d="M2 2h16v12h-5l-3 4v-4H2z" fill="#fff" /><path d="M5 5.500h10M5 8.500h10M5 11.500h6" stroke="#111" /></svg>
				<b>1</b>
			</button>
		</div>
	</div>
</div>

<style>
	:global(body) {
		background: #f0f0f0;
	}

	.window {
		position: relative;
		display: flex;
		flex-direction: column;
		height: 100vh;
		min-height: 640px;
		overflow: hidden;
		background: #f0f0f0;
		color: #000;
		font: 12px/16px 'Noto Sans', 'Noto Sans CJK SC', sans-serif;
		white-space: nowrap;
	}

	.window * {
		box-sizing: border-box;
	}

	button,
	input,
	select {
		font: inherit;
		color: inherit;
	}

	button {
		display: flex;
		align-items: center;
		justify-content: center;
		margin: 0;
		padding: 0;
		border: 0;
		background: none;
	}

	h1,
	h2,
	h3 {
		margin: 0;
		font: inherit;
	}

	svg {
		display: block;
		flex: none;
	}

	.icon {
		width: 16px;
		height: 16px;
	}

	.arrow {
		width: 7px;
		height: 4px;
	}

	/* title and menu */
	.titlebar {
		display: flex;
		align-items: center;
		height: 23px;
		flex: none;
		padding-left: 2px;
		background: #fff;
	}

	h1 {
		font: 13px/16px Roboto, 'Noto Sans CJK SC', sans-serif;
	}

	.logo {
		width: 16px;
		height: 16px;
		margin-right: 5px;
	}

	.caption {
		display: flex;
		margin-left: auto;
		padding-right: 2px;
	}

	.caption button {
		width: 46px;
		height: 20px;
	}

	.caption svg {
		width: 10px;
		height: 10px;
	}

	.ime {
		position: absolute;
		top: 0;
		right: 192px;
		width: 206px;
	}

	.ime-num {
		font-size: 9px;
		font-weight: 700;
	}

	.menubar {
		display: flex;
		align-items: center;
		height: 29px;
		flex: none;
		padding-left: 2px;
	}

	.menus {
		display: flex;
		gap: 1px;
		margin-right: 3px;
	}

	.menu {
		height: 24px;
		padding: 0 5px;
	}

	.hint {
		height: 27px;
		margin-left: 4px;
		padding: 6px 30px 0 29px;
		background: linear-gradient(#f8f8f8, #f2f2f2);
		color: #5a2d00;
		text-decoration: none;
	}

	.account {
		display: flex;
		flex: 1;
		align-items: center;
		height: 27px;
		margin-left: 1px;
		padding-left: 3px;
		background: linear-gradient(#f8f8f8, #f2f2f2);
	}

	.beans {
		padding: 0 4px 0 6px;
	}

	.more {
		align-self: flex-start;
		margin-left: auto;
		padding: 0 4px;
		font-size: 14px;
		font-weight: 600;
		line-height: 16px;
	}

	/* toolbars */
	.bars {
		display: flex;
		gap: 3px;
		flex: none;
		padding: 2px 0 2px 1px;
	}

	.bar {
		display: flex;
		align-items: center;
		height: 26px;
		border-radius: 2px;
		background: linear-gradient(#fcfcfc, #f0f0f0);
	}

	.bars .bar {
		height: 28px;
	}

	.bars .more {
		margin-left: 12px;
	}

	.calc {
		flex: 0 0 547px;
	}

	.wide {
		flex: 1;
	}

	.bars .calc .more,
	.bars .wide .more {
		margin-left: auto;
	}

	.tool {
		gap: 4px;
		height: 24px;
		padding: 0 3px 0 2px;
		border: 1px solid transparent;
	}

	.tool:hover:enabled {
		background: #e3eef9;
	}

	.tool:disabled {
		color: #8c8c8c;
	}

	.tool.active {
		border-color: #0f7ad6;
		background: #dcebf8;
	}

	.drop {
		display: flex;
		justify-content: center;
		width: 8px;
	}

	.drop.tight {
		margin-left: -4px;
	}

	.sep {
		flex: none;
		width: 1px;
		height: 16px;
		margin: 0 3px 0 2px;
		background: #b8b8b8;
	}

	.grip {
		flex: none;
		width: 3px;
		height: 16px;
		margin: 0 2px 0 3px;
		background: repeating-linear-gradient(#bdbdbd 0 2px, transparent 2px 4px);
	}

	.combo {
		display: flex;
		align-items: center;
		position: relative;
		height: 24px;
		margin-right: 2px;
		background: #fff;
	}

	.combo.short {
		width: 58px;
	}

	.combo.long {
		width: 70px;
	}

	.combo select {
		width: 100%;
		height: 24px;
		padding: 0 12px 0 2px;
		border: 0;
		background: linear-gradient(90deg, #fff calc(100% - 12px), #f4f4f4 0);
		appearance: none;
	}

	.combo .arrow {
		position: absolute;
		right: 3px;
		pointer-events: none;
	}

	.draw .combo,
	.snap .combo {
		margin-right: 0;
	}

	/* navigation panel */
	.body {
		display: flex;
		flex: 1;
		gap: 4px;
		min-height: 0;
	}

	.nav {
		display: flex;
		flex: 0 0 213px;
		flex-direction: column;
		padding: 0 1px 2px 0;
		font-family: 'Noto Sans Mono CJK SC', 'Noto Sans CJK SC', monospace;
	}

	.nav-head {
		display: flex;
		align-items: center;
		height: 15px;
		margin-bottom: 2px;
		background: #0054e3;
		color: #fff;
	}

	.nav-head h2 {
		flex: 1;
		font-size: 13px;
		line-height: 15px;
	}

	.nav-head button {
		width: 18px;
		height: 15px;
	}

	.nav-head svg {
		width: 9px;
		height: 9px;
	}

	.tab {
		height: 22px;
		border: 1px solid #a0a0a0;
		border-width: 1px 1px 0;
		box-shadow: inset 1px 1px #fff;
		background: #f0f0f0;
	}

	.tab.pressed {
		border-bottom: 2px solid #808080;
		border-right: 2px solid #808080;
	}

	.tab:last-child {
		border-bottom-width: 1px;
	}

	.nav-tools {
		display: flex;
		gap: 6px;
		height: 27px;
		padding-left: 6px;
		background: #f7f7f7;
	}

	.nav-tools svg {
		width: 17px;
		height: 16px;
	}

	.tree {
		flex: 1;
		min-height: 0;
		margin: 0 0 0 2px;
		padding: 1px 0 0;
		overflow: hidden;
		border: 1px solid #828790;
		background: #fff;
		list-style: none;
	}

	.tree li {
		display: flex;
		align-items: center;
		gap: 2px;
		height: 16px;
		padding-left: 6px;
	}

	.tree li.deep {
		position: relative;
		padding-left: 42px;
	}

	/* dotted branch lines */
	.tree li.deep::before {
		content: '';
		position: absolute;
		top: 0;
		left: 31px;
		width: 10px;
		height: 8px;
		border-left: 1px dotted #808080;
		border-bottom: 1px dotted #808080;
	}

	.tree li.deep::after {
		content: '';
		position: absolute;
		top: 0;
		left: 11px;
		height: 16px;
		border-left: 1px dotted #a0a0a0;
	}

	.twist {
		width: 10px;
		height: 10px;
		margin-right: 5px;
	}

	.node {
		gap: 4px;
		height: 16px;
	}

	.node.selected {
		background: #d9d9d9;
	}

	.tree em {
		align-self: flex-start;
		background: #ffd800;
		font: italic 700 8px/9px 'DejaVu Sans', sans-serif;
	}

	/* work area */
	.work {
		display: flex;
		flex: 1;
		flex-direction: column;
		min-width: 0;
	}

	.row {
		display: flex;
		flex: none;
		gap: 2px;
		padding: 0 0 2px 1px;
	}

	.row.split {
		gap: 74px;
	}

	.stub {
		width: 28px;
	}

	.viewport {
		position: relative;
		flex: 1;
		min-height: 180px;
		margin-right: 1px;
		overflow: hidden;
		background: #000;
	}

	.scene {
		width: 100%;
		height: 100%;
	}

	.mark {
		fill: #ccc;
		font: 15px 'Liberation Sans', sans-serif;
	}

	.axis {
		font: 300 13px 'Open Sans', sans-serif;
	}

	.panel {
		position: absolute;
		top: 2px;
		left: 10px;
		width: 166px;
		height: 178px;
		border: 1px solid #777;
		background: #fff;
		box-shadow: 2px 2px 5px rgba(0, 0, 0, 0.5);
	}

	.panel h3 {
		height: 31px;
		padding: 7px;
		color: #999;
	}

	.panel-list {
		height: 145px;
		padding: 1px 3px;
		border: 1px solid #828790;
		font-family: 'Noto Sans CJK SC', sans-serif;
		line-height: 12px;
	}

	.panel-list label {
		display: flex;
		align-items: center;
		gap: 4px;
		height: 12px;
	}

	.panel-list input,
	.turn input {
		width: 11px;
		height: 11px;
		margin: 0;
		border: 1px solid #777;
		background: #fff;
		appearance: none;
	}

	.panel-list input:checked {
		background: url("data:image/svg+xml,%3Csvg xmlns='http://www.w3.org/2000/svg' viewBox='0 0 9 9'%3E%3Cpath d='M1 4.5l2.500 2.500L8 1.500' fill='none' stroke='%23333' stroke-width='1.200'/%3E%3C/svg%3E");
	}

	.snap {
		padding: 1px 0 5px 1px;
	}

	.snap .bar {
		height: 29px;
		padding-right: 6px;
	}

	.snap .grip:not(:first-child) {
		margin-left: 5px;
	}

	.dimmed {
		padding: 0 2px 0 1px;
		color: #888;
	}

	label.dimmed {
		padding: 0 3px 0 2px;
	}

	.spinner {
		display: flex;
		width: 58px;
		height: 23px;
		border: 1px solid #7a7a7a;
		color: #888;
	}

	.spinner.long {
		width: 68px;
	}

	.spinner input {
		flex: 1;
		min-width: 0;
		padding: 0 4px 0 0;
		border: 0;
		background: none;
		text-align: right;
	}

	.steps {
		display: flex;
		flex-direction: column;
		justify-content: space-between;
		width: 14px;
		padding: 4px 5px 4px 2px;
	}

	.steps svg {
		width: 6px;
		height: 3px;
	}

	.turn {
		display: flex;
		align-items: center;
		gap: 9px;
		padding: 0 4px 0 1px;
	}

	/* rebar editor */
	.dock {
		display: flex;
		flex: none;
		padding-bottom: 1px;
	}

	.dock-grip {
		width: 13px;
		background: radial-gradient(circle, #bbb 1px, transparent 1px) 0 0 / 4px 5px;
	}

	.dock-grip button {
		width: 11px;
		height: 10px;
		border: 1px solid #444;
		background: #ddd;
		color: #800;
		font-size: 11px;
		line-height: 8px;
	}

	.dock-main {
		flex: 1;
		min-width: 0;
		margin-right: 1px;
	}

	.rebar {
		height: 25px;
	}

	.plain {
		padding: 0 6px 0 5px;
	}

	output {
		padding-left: 3px;
	}

	.sheet {
		height: 173px;
		display: flex;
		flex-direction: column;
		justify-content: space-between;
		border: 1px solid #a8a8a8;
		background: #fff;
		font-family: 'Noto Sans Mono CJK SC', 'Noto Sans CJK SC', monospace;
	}

	table {
		width: 100%;
		table-layout: fixed;
		border-collapse: separate;
		border-spacing: 0;
	}

	th,
	td {
		height: 29px;
		padding: 0 1px;
		border: solid #c0c0c0;
		border-width: 0 1px 1px 0;
		font-weight: 400;
		line-height: 16px;
		overflow: hidden;
	}

	td {
		background: #ccffda;
		text-align: left;
	}

	th {
		background: linear-gradient(90deg, #fdfdfd, #f0f0f0);
	}

	thead th {
		height: 20px;
		background: linear-gradient(#fff, #ececec);
	}

	thead th.hot {
		background: linear-gradient(#f9d399, #f2ba5c);
		color: #5c0a3c;
	}

	tbody th.hot {
		background: #ffd48a;
		color: #5c0a3c;
	}

	tbody th {
		padding-right: 8px;
		font-weight: 500;
	}

	tr.tall th,
	tr.tall td {
		height: 44px;
	}

	tr.blank th,
	tr.blank td {
		height: 19px;
	}

	tr.blank td {
		background: #fff;
	}

	td.frozen {
		padding-left: 2px;
		border-right-color: #000;
	}

	td.current {
		background: #aee9d8;
	}

	.grade svg {
		width: 10px;
		height: 10px;
		margin: 0 auto;
	}

	td.shape {
		padding: 0;
	}

	.shape svg {
		width: 100%;
	}

	.scroll {
		display: flex;
		height: 17px;
		padding-bottom: 1px;
		background: #f0f0f0;
	}

	.scroll button {
		width: 17px;
	}

	.scroll svg {
		width: 8px;
		height: 8px;
	}

	.track {
		flex: 1;
	}

	.thumb {
		width: 66%;
		height: 16px;
		background: #cdcdcd;
	}

	/* status and taskbar */
	.status {
		display: flex;
		flex: none;
		gap: 2px;
		height: 21px;
		font-family: 'Noto Sans Mono CJK SC', 'Noto Sans CJK SC', monospace;
	}

	.status span {
		padding: 1px;
		border: 1px solid #d4d4d4;
		background: linear-gradient(#fcfcfc, #f2f2f2);
	}

	.s-xy {
		width: 148px;
	}

	.s-h {
		width: 78px;
	}

	.s-b {
		width: 98px;
	}

	.s-n {
		width: 48px;
	}

	.status .s-fill {
		flex: 1;
	}

	.s-fps {
		width: 70px;
	}

	.taskbar {
		display: flex;
		flex: none;
		height: 40px;
		background: #010c0f;
		color: #fff;
	}

	.start {
		width: 48px;
		background: #000;
	}

	.start svg {
		width: 16px;
		height: 16px;
	}

	.search {
		display: flex;
		align-items: center;
		width: 344px;
		padding: 0 14px 0 9px;
		background: #333;
	}

	.ring {
		width: 22px;
		height: 22px;
	}

	.search input {
		flex: 1;
		min-width: 0;
		padding: 0 5px;
		border: 0;
		background: none;
		font-size: 14px;
	}

	.search input::placeholder {
		color: #a0a0a0;
		opacity: 1;
	}

	.mic {
		width: 12px;
		height: 18px;
	}

	.apps {
		display: flex;
		gap: 2px;
	}

	.apps button {
		width: 48px;
	}

	.apps svg {
		width: 24px;
		height: 24px;
	}

	.apps .running {
		box-shadow: inset 0 -2px #76b9ed;
	}

	.apps .front {
		background: #343e42;
	}

	.tray {
		display: flex;
		align-items: center;
		gap: 7px;
		margin-left: auto;
		padding-right: 19px;
	}

	.tray svg {
		width: 16px;
		height: 16px;
	}

	.tray .kb {
		width: 24px;
	}

	.link {
		margin-right: 14px;
	}

	.cpu,
	time {
		text-align: center;
		line-height: 18px;
	}

	.cpu {
		margin-right: 12px;
	}

	time {
		margin: 0 16px 0 10px;
	}

	.lang {
		margin: 0 8px 0 4px;
		font-size: 18px;
	}

	.notes {
		position: relative;
	}

	.tray .notes svg {
		width: 20px;
		height: 20px;
	}

	.notes b {
		position: absolute;
		top: 6px;
		left: 7px;
		width: 16px;
		height: 16px;
		border: 1px solid #aaa;
		border-radius: 50%;
		background: #333;
		font-size: 11px;
		line-height: 14px;
	}
</style>
